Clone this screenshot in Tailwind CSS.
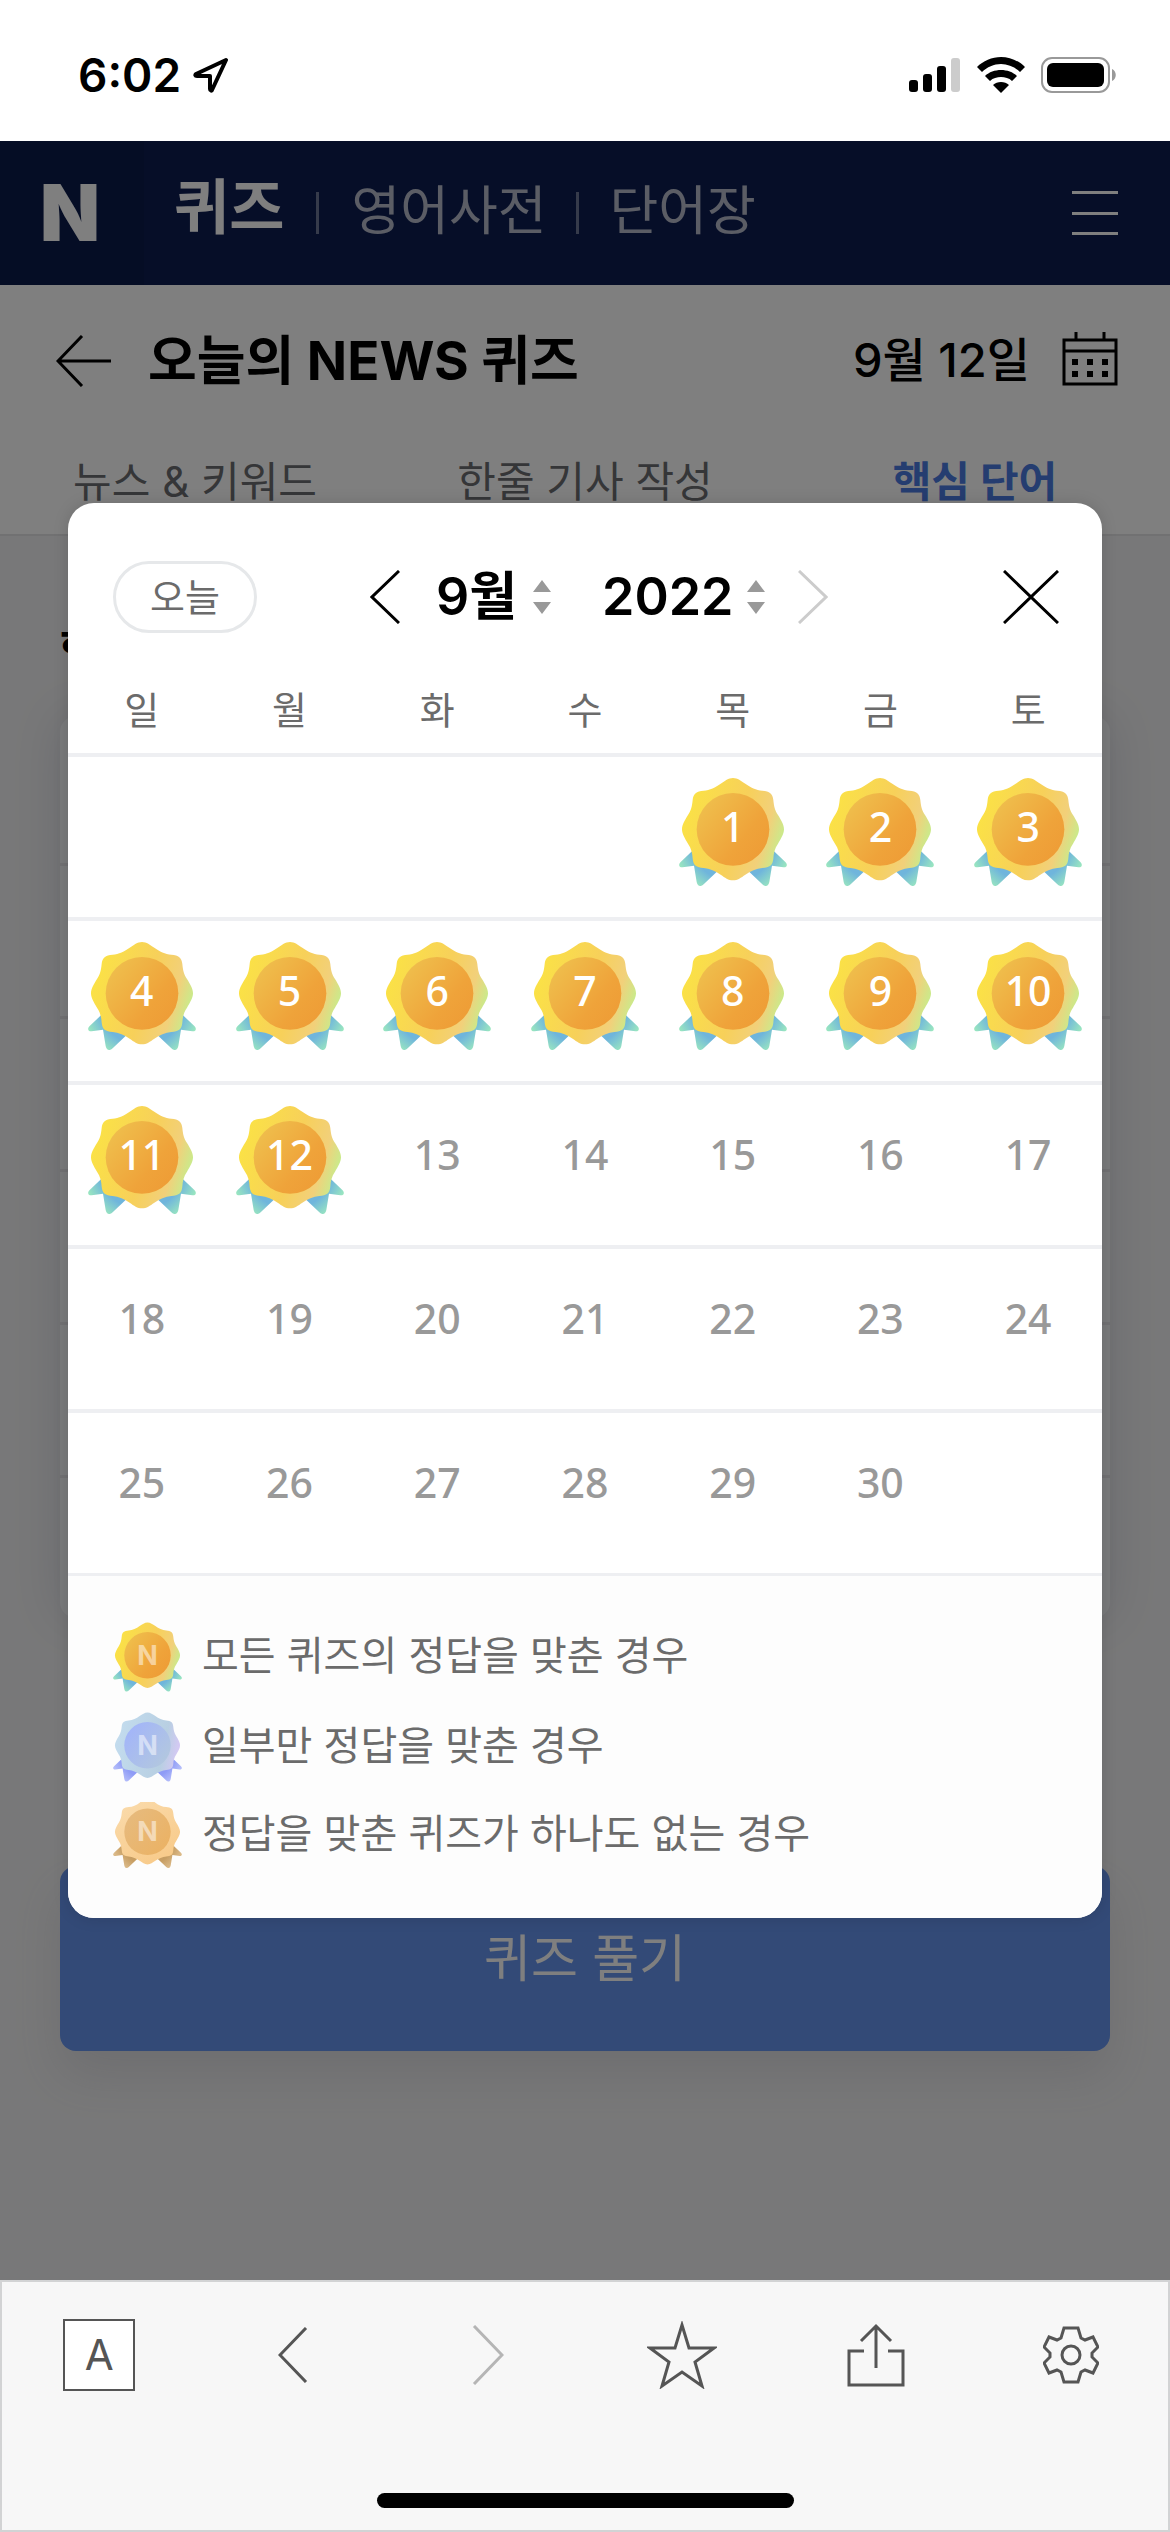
<!DOCTYPE html>
<html lang="ko">
<head>
    <meta charset="UTF-8">
    <meta name="viewport" content="width=device-width, initial-scale=1.0">
    <title>오늘의 NEWS 퀴즈</title>
    <script src="https://cdn.jsdelivr.net/npm/@tailwindcss/browser@4"></script>
</head>
<body class="min-h-screen flex flex-col bg-white text-black font-['Inter','Noto_Sans_CJK_KR',sans-serif]">

    <!-- Medal shapes -->
    <svg class="absolute w-0 h-0" aria-hidden="true">
        <defs>
            <linearGradient id="gold-petal" x1="0" y1="0.3" x2="1" y2="0.6">
                <stop offset="0" stop-color="#fbe344"/><stop offset="0.55" stop-color="#f7d05a"/><stop offset="0.82" stop-color="#f2d07a"/><stop offset="1" stop-color="#c4ee8e"/>
            </linearGradient>
            <linearGradient id="gold-disc" x1="0" y1="0" x2="1" y2="0.8">
                <stop offset="0" stop-color="#efc450"/><stop offset="0.7" stop-color="#efa33a"/><stop offset="1" stop-color="#ee9c36"/>
            </linearGradient>
            <radialGradient id="gold-ribbon" gradientUnits="userSpaceOnUse" cx="162" cy="180" r="185">
                <stop offset="0.7" stop-color="#6fb5dc"/><stop offset="1" stop-color="#9eebbd"/>
            </radialGradient>
            <linearGradient id="blue-petal" x1="0" y1="0.4" x2="1" y2="0.6">
                <stop offset="0" stop-color="#c3dcee"/><stop offset="0.75" stop-color="#b8cfe2"/><stop offset="1" stop-color="#d8c8f6"/>
            </linearGradient>
            <linearGradient id="blue-disc" x1="0" y1="0" x2="1" y2="0.8">
                <stop offset="0" stop-color="#a0b2fd"/><stop offset="1" stop-color="#b3c8de"/>
            </linearGradient>
            <radialGradient id="blue-ribbon" gradientUnits="userSpaceOnUse" cx="162" cy="180" r="185">
                <stop offset="0.7" stop-color="#8f9cf6"/><stop offset="1" stop-color="#bcc4fb"/>
            </radialGradient>
            <linearGradient id="bronze-petal" x1="0" y1="0" x2="0.6" y2="1">
                <stop offset="0" stop-color="#fadcae"/><stop offset="1" stop-color="#f8cb8b"/>
            </linearGradient>
            <linearGradient id="bronze-disc" x1="0" y1="0" x2="1" y2="0.8">
                <stop offset="0" stop-color="#e6bb80"/><stop offset="1" stop-color="#ebb264"/>
            </linearGradient>
            <radialGradient id="bronze-ribbon" gradientUnits="userSpaceOnUse" cx="162" cy="180" r="185">
                <stop offset="0.7" stop-color="#c79e63"/><stop offset="1" stop-color="#e0c193"/>
            </radialGradient>
            <path id="ribbon" d="M42 217 5 252C-3 260 0 269 11 268L45 263 53 312C56 326 66 327 74 319L116 279ZM282 217 319 252C327 260 324 269 313 268L279 263 271 312C268 326 258 327 250 319L208 279Z"/>
            <path id="petal" d="M162 0C176 0 186 9 199 17 214 28 232 37 250 38 272 40 281 46 283 66 285 84 287 97 297 111 306 126 315 140 315 154 315 168 306 182 297 197 287 211 284 226 283 242 281 262 272 268 250 270 232 272 214 280 199 290 186 299 176 307 162 307 148 307 138 299 125 290 110 280 92 272 74 270 52 268 43 262 41 242 40 226 37 211 27 197 18 182 9 168 9 154 9 140 18 126 27 111 37 97 39 84 41 66 43 46 52 40 74 38 92 37 110 28 125 17 138 9 148 0 162 0Z"/>
        </defs>
        <symbol id="medal-gold" viewBox="0 0 324 324">
            <use href="#ribbon" fill="url(#gold-ribbon)"/><use href="#petal" fill="url(#gold-petal)"/><circle cx="162" cy="154" r="109" fill="url(#gold-disc)"/>
        </symbol>
        <symbol id="medal-blue" viewBox="0 0 324 324">
            <use href="#ribbon" fill="url(#blue-ribbon)"/><use href="#petal" fill="url(#blue-petal)"/><circle cx="162" cy="154" r="109" fill="url(#blue-disc)"/>
        </symbol>
        <symbol id="medal-bronze" viewBox="0 14 324 310">
            <use href="#ribbon" fill="url(#bronze-ribbon)"/><use href="#petal" fill="url(#bronze-petal)"/><circle cx="162" cy="154" r="109" fill="url(#bronze-disc)"/>
        </symbol>
    </svg>

    <!-- Status bar -->
    <div class="h-[141px] flex items-center justify-between pl-[78px] pr-[54px] pt-2">
        <div class="flex items-center gap-3">
            <span class="text-[46px] leading-none font-semibold">6:02</span>
            <svg class="w-9 h-9" viewBox="0 0 36 36" fill="none" stroke="#000" stroke-width="4" stroke-linejoin="round"><path d="M33 3 3 17c-1 1-1 2 1 2h13v13c0 2 2 2 2 1Z"/></svg>
        </div>
        <div class="flex items-center gap-4">
            <svg class="w-[52px] h-9" viewBox="0 0 52 36"><rect x="0" y="23" width="9" height="12" rx="3"/><rect x="14" y="17" width="9" height="18" rx="3"/><rect x="28" y="9" width="9" height="26" rx="3"/><rect x="42" y="1" width="9" height="34" rx="3" fill="#ccc"/></svg>
            <svg class="w-12 h-9" viewBox="0 0 48 36"><path d="M24 0C15 0 6 4 0 10l5 5c5-5 12-8 19-8s14 3 19 8l5-5C42 4 33 0 24 0Zm0 13c-6 0-12 2-16 6l5 5c3-3 7-4 11-4s8 1 11 4l5-5c-4-4-10-6-16-6Zm0 12c-3 0-6 1-8 3l8 8 8-8c-2-2-5-3-8-3Z"/></svg>
            <svg class="w-[75px] h-9" viewBox="0 0 75 36"><rect x="1" y="1" width="67" height="34" rx="10" fill="none" stroke="#999" stroke-width="2"/><rect x="6" y="6" width="57" height="24" rx="6"/><path d="M71 12c5 2 5 10 0 12Z" fill="#999"/></svg>
        </div>
    </div>

    <main class="relative flex-1 bg-[#f1f1f2]">
        <!-- Header -->
        <header class="h-36 flex items-center bg-[#0c1c50] text-white pr-[52px]">
            <a href="#" class="w-36 h-full flex items-center pl-10 bg-[#0b1a4a] text-[78px] leading-none font-black">N</a>
            <nav class="flex-1 flex items-center pl-[30px] text-[53px] leading-none text-white/70">
                <a href="#" class="pb-3 text-[60px] font-bold text-white">퀴즈</a>
                <span class="w-[3px] h-[42px] mx-8 bg-white/40"></span>
                <a href="#" class="pb-1">영어사전</a>
                <span class="w-[3px] h-[42px] mx-[30px] bg-white/40"></span>
                <a href="#" class="pb-1">단어장</a>
            </nav>
            <button type="button" aria-label="메뉴" class="w-[46px] h-11 flex flex-col justify-between">
                <span class="h-[3px] w-full bg-white"></span>
                <span class="h-[3px] w-full bg-white"></span>
                <span class="h-[3px] w-full bg-white"></span>
            </button>
        </header>

        <!-- Page title -->
        <div class="bg-white border-b-2 border-[#e2e2e4]">
            <div class="h-[152px] flex items-center pl-14 pr-[52px]">
                <button type="button" aria-label="뒤로">
                    <svg class="w-14 h-[52px]" viewBox="0 0 56 52" fill="none" stroke="#000" stroke-width="3"><path d="M26 1 2 26l24 25M2 26h53"/></svg>
                </button>
                <h1 class="pl-9 flex-1 text-[53px] leading-none font-bold">오늘의 NEWS 퀴즈</h1>
                <span class="pr-8 pb-1 text-[47px] leading-none font-medium">9월 12일</span>
                <button type="button" aria-label="달력">
                    <svg class="w-14 h-[54px] mb-1" viewBox="0 0 56 54" fill="none" stroke="#000" stroke-width="3"><path d="M2 8h52v44H2zM2 19h52M14 0v9M42 0v9"/><path fill="#000" stroke="none" d="M10 27h6v6h-6zM25 27h6v6h-6zM40 27h6v6h-6zM10 39h6v6h-6zM25 39h6v6h-6zM40 39h6v6h-6z"/></svg>
                </button>
            </div>
            <nav class="h-[97px] grid grid-cols-3 items-center pb-2 text-center text-[42px] leading-none text-[#6b6c70]">
                <a href="#">뉴스 &amp; 키워드</a>
                <a href="#">한줄 기사 작성</a>
                <a href="#" class="font-bold text-[#4a7ae0]">핵심 단어</a>
            </nav>
        </div>

        <!-- Word list -->
        <section class="px-15 pt-[90px]">
            <h2 class="text-[46px] leading-none font-bold">핵심 단어</h2>
            <ul class="mt-11 rounded-2xl bg-[#f3f4f7] shadow-[0_0_50px_#d2d4dc] divide-y-3 divide-[#e2e3e7]">
                <li class="h-[150px]"></li>
                <li class="h-[153px]"></li>
                <li class="h-[153px]"></li>
                <li class="h-[153px]"></li>
                <li class="h-[153px]"></li>
                <li class="h-[140px]"></li>
            </ul>
            <button type="button" class="mt-[248px] w-full h-[185px] rounded-2xl bg-[#6694ee] text-white text-[51px] leading-none shadow-[0_24px_50px_#dcdce0]">퀴즈 풀기</button>
        </section>

        <!-- Calendar popup -->
        <div class="absolute inset-0 bg-black/50 px-17 pt-[362px]">
            <div role="dialog" aria-label="달력" class="rounded-[26px] bg-white overflow-hidden shadow-[0_0_16px_#0002]">
                <div class="flex items-center justify-between pl-[45px] pr-[43px] pt-[60px] h-32">
                    <button type="button" class="w-36 h-[72px] rounded-full border-3 border-[#e6e8ea] text-[38px] leading-none text-[#6b6b6b]">오늘</button>
                    <div class="flex items-center">
                        <button type="button" aria-label="이전 달">
                            <svg class="w-[30px] h-[54px]" viewBox="0 0 30 54" fill="none" stroke="#000" stroke-width="3"><path d="M29 1 2 27l27 26"/></svg>
                        </button>
                        <label class="flex items-center pl-9 gap-3">
                            <select aria-label="월" class="appearance-none w-[84px] text-[52px] leading-[60px] font-semibold">
                                <option>9월</option>
                            </select>
                            <svg class="w-5 h-[34px]" viewBox="0 0 20 34" fill="#999"><path d="M10 0l9 12H1zM10 34l9-12H1z"/></svg>
                        </label>
                        <label class="flex items-center pl-[50px] gap-3">
                            <select aria-label="연도" class="appearance-none w-[132px] text-[52px] leading-[60px] font-semibold">
                                <option>2022</option>
                            </select>
                            <svg class="w-5 h-[34px]" viewBox="0 0 20 34" fill="#999"><path d="M10 0l9 12H1zM10 34l9-12H1z"/></svg>
                        </label>
                        <button type="button" aria-label="다음 달" class="ml-8">
                            <svg class="w-[30px] h-[54px]" viewBox="0 0 30 54" fill="none" stroke="#ccc" stroke-width="3"><path d="M1 1l27 26L1 53"/></svg>
                        </button>
                    </div>
                    <button type="button" aria-label="닫기" class="w-[118px] flex justify-end">
                        <svg class="w-14 h-[54px]" viewBox="0 0 56 54" fill="none" stroke="#000" stroke-width="3"><path d="M1 1l54 52M55 1 1 53"/></svg>
                    </button>
                </div>

                <table class="w-full table-fixed border-separate border-spacing-0 text-center">
                    <thead>
                        <tr class="h-[122px] text-[38px] leading-none text-[#6b6b6b]">
                            <th class="font-normal pt-9">일</th>
                            <th class="font-normal pt-9">월</th>
                            <th class="font-normal pt-9">화</th>
                            <th class="font-normal pt-9">수</th>
                            <th class="font-normal pt-9">목</th>
                            <th class="font-normal pt-9">금</th>
                            <th class="font-normal pt-9">토</th>
                        </tr>
                    </thead>
                    <tbody id="days" class="font-['Noto_Sans',sans-serif] text-[41px] leading-none"></tbody>
                </table>

                <ul class="border-t-3 border-[#eeeff2] bg-[#fdfdfd] px-[45px] pt-[46px] pb-[50px] flex flex-col gap-5 text-[40px] leading-none text-[#6b6b6b] font-['Noto_Sans_CJK_KR',sans-serif]">
                    <li class="flex items-center gap-5">
                        <span class="relative flex">
                            <svg class="w-[69px] h-[70px]"><use href="#medal-gold"/></svg>
                            <span class="absolute inset-x-0 top-5 text-center font-['Inter'] text-[27px] leading-none font-bold text-white/50">N</span>
                        </span>
                        <span class="pb-2">모든 퀴즈의 정답을 맞춘 경우</span>
                    </li>
                    <li class="flex items-center gap-5">
                        <span class="relative flex">
                            <svg class="w-[69px] h-[70px]"><use href="#medal-blue"/></svg>
                            <span class="absolute inset-x-0 top-5 text-center font-['Inter'] text-[27px] leading-none font-bold text-white/50">N</span>
                        </span>
                        <span class="pb-2">일부만 정답을 맞춘 경우</span>
                    </li>
                    <li class="flex items-center gap-5">
                        <span class="relative flex">
                            <svg class="w-[69px] h-[66px]"><use href="#medal-bronze"/></svg>
                            <span class="absolute inset-x-0 top-4 text-center font-['Inter'] text-[27px] leading-none font-bold text-white/50">N</span>
                        </span>
                        <span class="pb-2">정답을 맞춘 퀴즈가 하나도 없는 경우</span>
                    </li>
                </ul>
            </div>
        </div>
    </main>

    <!-- Bottom toolbar -->
    <footer class="h-[252px] flex flex-col justify-between bg-[#f7f7f7] border-2 border-[#d2d3d4]">
        <nav class="grid grid-cols-6 h-[146px] items-center justify-items-center">
            <button type="button" class="w-[72px] h-[72px] bg-white border-2 border-[#555] text-[42px] leading-none text-[#555]">A</button>
            <button type="button" aria-label="뒤로"><svg class="w-[30px] h-[56px]" viewBox="0 0 30 56" fill="none" stroke="#555" stroke-width="3"><path d="M28 1 2 28l26 27"/></svg></button>
            <button type="button" aria-label="앞으로"><svg class="w-8 h-[60px]" viewBox="0 0 32 60" fill="none" stroke="#b5b5b5" stroke-width="3"><path d="M2 1l28 29L2 59"/></svg></button>
            <button type="button" aria-label="즐겨찾기"><svg class="w-[70px] h-[68px]" viewBox="0 0 70 68" fill="none" stroke="#555" stroke-width="3"><path d="M35 4l7 23h25L48 41l7 24-20-14-20 14 7-24L3 27h25Z"/></svg></button>
            <button type="button" aria-label="공유"><svg class="w-[58px] h-[64px]" viewBox="0 0 58 64" fill="none" stroke="#555" stroke-width="3"><path d="M17 28H2v34h54V28H41M29 3v42M14 18 29 3l15 15"/></svg></button>
            <button type="button" aria-label="설정"><svg class="w-14 h-[58px]" viewBox="0 0 56 58" fill="none" stroke="#555" stroke-width="3"><path d="M21 2h14l3 10 4 2 8-3 5 10-6 6v4l6 6-5 10-8-3-4 2-3 10H21l-3-10-4-2-8 3-5-10 6-6v-4l-6-6 5-10 8 3 4-2Z"/><circle cx="28" cy="29" r="9"/></svg></button>
        </nav>
        <div class="self-center w-[417px] h-[15px] mb-[22px] rounded-full bg-black"></div>
    </footer>

    <script>
        // September 2022 starts on a Thursday, medals run up to the 12th
        const firstDay = 4, lastDate = 30, lastMedal = 12;
        let html = '';
        for (let week = 0; week < 5; week++) {
            html += '<tr>';
            for (let d = 0; d < 7; d++) {
                const date = week * 7 + d - firstDay + 1;
                html += '<td class="h-[164px] p-0 pt-[21px] border-t-4 border-[#eeeff2] align-top">';
                if (date > 0 && date <= lastDate) {
                    html += date <= lastMedal
                        ? `<button type="button" class="relative w-27 h-27 pb-3 align-top text-white font-medium"><svg class="absolute inset-0 w-27 h-27"><use href="#medal-gold"/></svg><span class="relative">${date}</span></button>`
                        : `<button type="button" class="w-27 h-27 pb-3 align-top text-[#999] font-medium">${date}</button>`;
                }
                html += '</td>';
            }
            html += '</tr>';
        }
        document.getElementById('days').innerHTML = html;
    </script>
</body>
</html>
